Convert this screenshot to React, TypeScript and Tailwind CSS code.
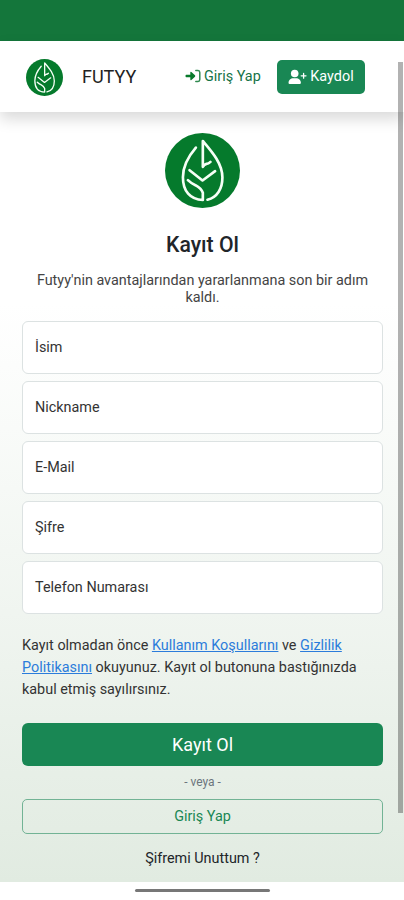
const fields = ['İsim', 'Nickname', 'E-Mail', 'Şifre', 'Telefon Numarası']

function Logo({ className }: { className: string }) {
  return (
    <svg viewBox="45 23 226 226" className={className} fill="none">
      <circle cx="158" cy="136" r="113" fill="#057a2c" />
      <g stroke="#f6fff6" strokeWidth="8" strokeLinecap="round" strokeLinejoin="round">
        <path d="M138 67C113 96 99 125 99 156C99 198 121 224 159 225V203Q154 190 138 181Q123 174 114 165" />
        <path d="M182 110Q176 116 170 116Q163 118 159 125V47C187 80 218 115 218 157C218 191 202 217 173 224" />
        <path d="M119 135L158 166L196 138" />
      </g>
    </svg>
  )
}

function LoginIcon() {
  return (
    <svg viewBox="0 0 17 16" className="h-4 w-[17px] shrink-0" fill="none">
      <path d="M1.2 6.7H5.3V4.4Q5.4 3.2 6.4 4L10 7.3Q10.6 8 10 8.7L6.4 12Q5.4 12.8 5.3 11.6V9.3H1.2Q.5 9.2 .5 8Q.5 6.8 1.2 6.7Z" fill="#087a2b" />
      <path d="M10.8 2.6H13Q14.8 2.7 14.8 4.6V11.4Q14.8 13.3 13 13.4H10.8" stroke="#318a50" strokeWidth="1.5" strokeLinecap="round" />
    </svg>
  )
}

function UserPlusIcon() {
  return (
    <svg viewBox="0 0 19 16" className="h-4 w-[19px] shrink-0" fill="currentColor">
      <circle cx="6.7" cy="4.5" r="3.8" />
      <path d="M.5 14.1C.5 11 2.7 9.2 5.3 9.2H8.1C10.7 9.2 12.9 11 12.9 14.1Q12.9 14.9 12.1 14.9H1.3Q.5 14.9 .5 14.1Z" />
      <path d="M15.6 4.4V9.2M13.2 6.8H18" stroke="currentColor" strokeWidth="1.3" strokeLinecap="round" />
    </svg>
  )
}

function Header() {
  return (
    <header className="relative z-10 flex h-[71px] shrink-0 items-center bg-white pl-[26px] shadow-[0_7px_14px_rgba(0,0,0,0.15)]">
      <Logo className="mt-px size-[37px]" />
      <span className="ml-[19px] w-[103px] text-[18px] text-[#222]">FUTYY</span>
      <a className="flex w-[92px] items-center gap-[2px] whitespace-nowrap text-[14.4px] text-[#157347]">
        <LoginIcon />
        Giriş Yap
      </a>
      <button className="flex h-[34px] w-[88px] items-center justify-center gap-[3px] rounded-[5px] bg-[#198754] text-[14.4px] text-white">
        <UserPlusIcon />
        Kaydol
      </button>
    </header>
  )
}

export default function App() {
  return (
    <div className="relative flex h-[900px] w-[404px] flex-col overflow-hidden bg-white font-[Roboto,sans-serif] text-[#212529]">
      <div className="h-[41px] shrink-0 bg-[#14763b]" />
      <Header />
      <main className="flex h-[770px] shrink-0 flex-col items-center bg-[linear-gradient(to_bottom,#fff_0%,#fff_25%,#f0f5f0_65%,#e1ebe1_100%)] pr-[21px] pl-[22px]">
        <Logo className="mt-[21px] size-[75px] shrink-0" />
        <h1 className="mt-[23px] text-[21.2px] leading-[27px] font-medium">Kayıt Ol</h1>
        <p className="mt-[14px] w-[350px] text-center text-[14.4px] leading-[17px] text-[#444]">
          Futyy'nin avantajlarından yararlanmana son bir adım kaldı.
        </p>
        <div className="mt-[15px] flex w-full flex-col gap-[7px]">
          {fields.map(f => (
            <label key={f} className="flex h-[53px] items-center rounded-[6px] border border-[#dce2e2] bg-white pt-px pl-3 text-[14.4px] text-[#333]">
              {f}
            </label>
          ))}
        </div>
        <div className="mt-[21px] w-full text-[14.4px] leading-[22px] whitespace-nowrap text-[#333]">
          <p>
            Kayıt olmadan önce <a className="text-[#2b7cdb] underline">Kullanım Koşullarını</a> ve{' '}
            <a className="text-[#2b7cdb] underline">Gizlilik</a>
          </p>
          <p>
            <a className="text-[#2b7cdb] underline">Politikasını</a> okuyunuz. Kayıt ol butonuna bastığınızda
          </p>
          <p>kabul etmiş sayılırsınız.</p>
        </div>
        <button className="mt-[22px] h-[43px] w-full shrink-0 rounded-[6px] bg-[#198754] text-[18px] text-white">
          Kayıt Ol
        </button>
        <span className="mt-[7px] text-[12px] leading-[18px] text-[#6c757d]">- veya -</span>
        <button className="mt-[8px] h-[35px] w-full shrink-0 rounded-[5px] border border-[#72b395] pt-px text-[14.4px] text-[#198754]">
          Giriş Yap
        </button>
        <a className="mt-[14px] text-[14.4px] leading-[22px]">Şifremi Unuttum ?</a>
      </main>
      <div className="mx-auto mt-[7px] h-[3px] w-[135px] rounded-full bg-[#777]" />
      <div className="absolute top-[62px] right-[1px] z-20 h-[751px] w-[5px] bg-black/30" />
    </div>
  )
}
